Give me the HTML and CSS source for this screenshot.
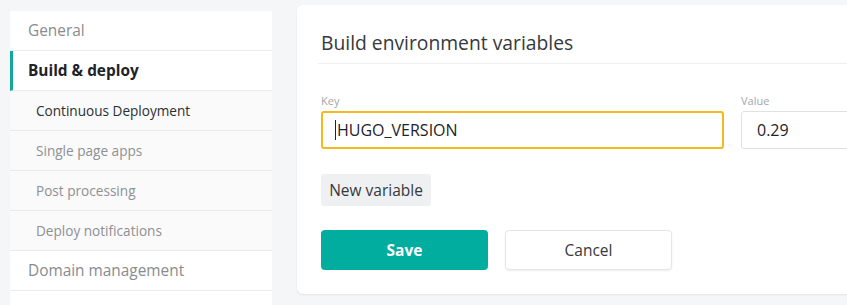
FILE: index.html
```html
<!DOCTYPE html>
<html>
<head>
<meta charset="utf-8">
<link rel="stylesheet" href="styles.css">
</head>
<body>
<div class="page">
  <nav class="sidebar">
    <div class="nav-item top">General</div>
    <div class="nav-item top active">Build &amp; deploy</div>
    <div class="nav-item sub current">Continuous Deployment</div>
    <div class="nav-item sub">Single page apps</div>
    <div class="nav-item sub">Post processing</div>
    <div class="nav-item sub">Deploy notifications</div>
    <div class="nav-item top">Domain management</div>
    <div class="nav-item top"></div>
  </nav>
  <main class="card">
    <h2 class="card-title">Build environment variables</h2>
    <div class="fields">
      <div class="field key">
        <label class="field-label">Key</label>
        <div class="input focused"><span class="caret"></span>HUGO_VERSION</div>
      </div>
      <div class="field value">
        <label class="field-label">Value</label>
        <div class="input">0.29</div>
      </div>
    </div>
    <button class="btn-new">New variable</button>
    <div class="actions">
      <button class="btn btn-save">Save</button>
      <button class="btn btn-cancel">Cancel</button>
    </div>
  </main>
</div>
</body>
</html>
```
FILE: styles.css
```css
html, body {
  margin: 0;
  padding: 0;
  background: #f5f6f7;
  overflow: hidden;
  font-family: "Open Sans", "Noto Sans", sans-serif;
}
.page {
  display: flex;
  align-items: flex-start;
  gap: 25px;
  padding: 5px 0 0 10px;
  width: 1200px;
  height: 300px;
}
.sidebar {
  margin-top: 6px;
  width: 262px;
  flex: none;
  background: #fff;
  border-radius: 3px 3px 0 0;
}
.nav-item {
  height: 39px;
  border-bottom: 1px solid #e9eaec;
  display: flex;
  align-items: center;
}
.nav-item.top {
  font-size: 15.4px;
  color: #888b8f;
  padding-left: 18px;
  background: #fff;
}
.nav-item.active {
  font-weight: 700;
  color: #1e2329;
  border-left: 3px solid #15a89a;
  padding-left: 15px;
}
.nav-item.sub {
  font-size: 13.6px;
  color: #8d9094;
  padding-left: 26px;
  background: #fafafa;
}
.nav-item.current {
  color: #2b2f33;
}
.card {
  width: 620px;
  flex: none;
  height: 289px;
  box-sizing: border-box;
  background: #fff;
  border-radius: 6px;
  box-shadow: 0 1px 2px rgba(0,0,0,0.08);
  padding: 24px 0 0 24px;
}
.card-title {
  margin: 0 0 0 -3px;
  padding: 0 0 7px 3px;
  font-size: 19.3px;
  line-height: 27px;
  font-weight: 400;
  color: #35393d;
  border-bottom: 1px solid #eceef0;
}
.fields {
  display: flex;
  gap: 17px;
  margin-top: 30px;
}
.field {
  display: flex;
  flex-direction: column;
  flex: none;
}
.field.key { width: 403px; }
.field.value { width: 200px; }
.field-label {
  font-size: 11px;
  color: #a3a6a9;
  height: 17px;
  line-height: 13px;
}
.input {
  height: 38px;
  box-sizing: border-box;
  border: 1px solid #dfe1e3;
  border-radius: 3px;
  font-size: 16px;
  color: #1e2329;
  display: flex;
  align-items: center;
  padding-left: 15px;
}
.input.focused {
  border: 2px solid #f1bb1f;
  padding-left: 12px;
}
.caret {
  display: inline-block;
  width: 1px;
  height: 20px;
  background: #222;
  margin-right: 1px;
}
.btn-new {
  display: block;
  margin-top: 25px;
  height: 32px;
  width: 110px;
  border: none;
  border-radius: 3px;
  background: #eff0f1;
  color: #35393d;
  font-family: inherit;
  font-size: 15.5px;
  padding: 0;
}
.actions {
  display: flex;
  gap: 17px;
  margin-top: 24px;
}
.btn {
  width: 167px;
  height: 40px;
  border-radius: 4px;
  font-family: inherit;
  font-size: 15.5px;
  padding: 0;
  box-sizing: border-box;
}
.btn-save {
  background: #00ad9f;
  color: #fff;
  font-weight: 700;
  border: none;
}
.btn-cancel {
  background: #fff;
  color: #35393d;
  border: 1px solid #e6e7e9;
  box-shadow: 0 1px 2px rgba(0,0,0,0.08);
}
```
